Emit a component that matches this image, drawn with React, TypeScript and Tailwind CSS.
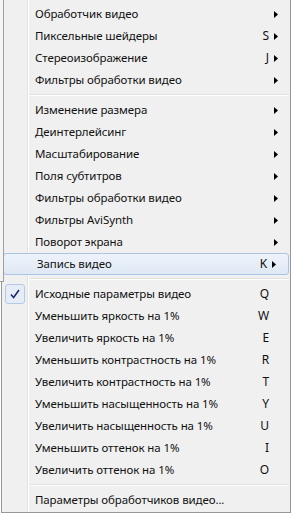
import React from "react";

type Item =
  | { type: "item"; label: string; key?: string; arrow?: boolean; hot?: boolean; checked?: boolean }
  | { type: "sep" };

const items: Item[] = [
  { type: "item", label: "Обработчик видео", arrow: true },
  { type: "item", label: "Пиксельные шейдеры", key: "S", arrow: true },
  { type: "item", label: "Стереоизображение", key: "J", arrow: true },
  { type: "item", label: "Фильтры обработки видео", arrow: true },
  { type: "sep" },
  { type: "item", label: "Изменение размера", arrow: true },
  { type: "item", label: "Деинтерлейсинг", arrow: true },
  { type: "item", label: "Масштабирование", arrow: true },
  { type: "item", label: "Поля субтитров", arrow: true },
  { type: "item", label: "Фильтры обработки видео", arrow: true },
  { type: "item", label: "Фильтры AviSynth", arrow: true },
  { type: "item", label: "Поворот экрана", arrow: true },
  { type: "item", label: "Запись видео", key: "K", arrow: true, hot: true },
  { type: "sep" },
  { type: "item", label: "Исходные параметры видео", key: "Q", checked: true },
  { type: "item", label: "Уменьшить яркость на 1%", key: "W" },
  { type: "item", label: "Увеличить яркость на 1%", key: "E" },
  { type: "item", label: "Уменьшить контрастность на 1%", key: "R" },
  { type: "item", label: "Увеличить контрастность на 1%", key: "T" },
  { type: "item", label: "Уменьшить насыщенность на 1%", key: "Y" },
  { type: "item", label: "Увеличить насыщенность на 1%", key: "U" },
  { type: "item", label: "Уменьшить оттенок на 1%", key: "I" },
  { type: "item", label: "Увеличить оттенок на 1%", key: "O" },
  { type: "sep" },
  { type: "item", label: "Параметры обработчиков видео..." },
];

function Arrow() {
  return (
    <svg width="4" height="7" viewBox="0 0 4 7" className="block">
      <path d="M0 0 L4 3.5 L0 7 Z" fill="#000" />
    </svg>
  );
}

function Check() {
  return (
    <svg width="10" height="10" viewBox="0 0 10 10" className="block">
      <path d="M1 5.5 L3.6 8.5 L9 1" fill="none" stroke="#1e2a6e" strokeWidth="1.6" />
    </svg>
  );
}

export default function App() {
  return (
    <div
      className="relative w-[291px] h-[514px] bg-white overflow-hidden"
      style={{ fontFamily: '"Noto Sans", "Open Sans", sans-serif' }}
    >
      <div className="relative w-[290px] h-[513px] bg-[#f0f0f0] border-l border-r border-b border-[#979797] ml-[1px]">
        {/* gutter line */}
        <div className="absolute left-[25px] top-0 bottom-0 w-[2px] border-l border-[#e2e3e3] bg-white" />
        <div className="relative flex flex-col pt-[3px]">
          {items.map((it, i) =>
            it.type === "sep" ? (
              <div key={i} className="h-[8px] flex items-center pl-[28px] pr-[1px]">
                <div className="w-full h-[2px] border-t border-[#e0e0e0] bg-white" />
              </div>
            ) : (
              <div
                key={i}
                className={
                  "relative h-[22px] flex items-center pl-[33px] pr-[12px] text-[11.5px] tracking-[-0.1px] text-[#111]" +
                  (it.hot
                    ? " mx-[1px] pl-[32px] pr-[11px] rounded-[3px] border border-[#aac4e6] bg-gradient-to-b from-[#eef3fa] to-[#dfe8f4]"
                    : "")
                }
              >
                {it.checked && (
                  <div className="absolute left-[3px] top-[1px] w-[20px] h-[20px] rounded-[3px] border border-[#b5c9e6] bg-[#e6edf7] flex items-center justify-center">
                    <Check />
                  </div>
                )}
                <span className="flex-1 whitespace-nowrap leading-none">{it.label}</span>
                <span className="leading-none text-[12px]">{it.key ?? ""}</span>
                <span className="w-[4px] ml-[5px] flex items-center">{it.arrow ? <Arrow /> : null}</span>
              </div>
            )
          )}
        </div>
      </div>
      {/* parent menu edge overlapping at top-left */}
      <div className="absolute left-0 top-0 w-[4px] h-[282px] border-r border-b border-[#a0a0a0] bg-[#f4f4f4]" />
    </div>
  );
}
